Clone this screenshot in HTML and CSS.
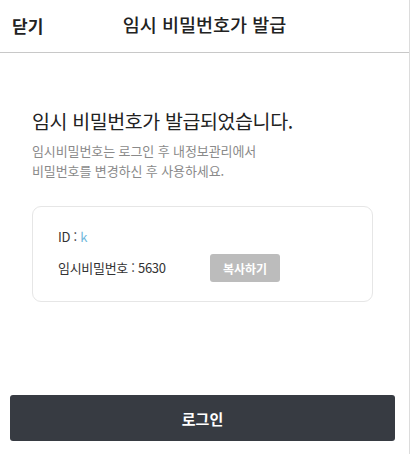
FILE: index.html
```html
<!DOCTYPE html>
<html lang="ko">

<head>
    <meta charset="UTF-8">
    <meta name="viewport" content="width=device-width, initial-scale=1.0">
    <title>임시 비밀번호가 발급</title>
    <link rel="stylesheet" href="styles.css">
</head>

<body>
    <div class="page">
        <!-- 상단 헤더 -->
        <header class="header">
            <a class="close-btn">닫기</a>
            <h1 class="header-title">임시 비밀번호가 발급</h1>
        </header>

        <div class="content">
            <h2 class="result-title">임시 비밀번호가 발급되었습니다.</h2>
            <p class="result-desc">임시비밀번호는 로그인 후 내정보관리에서<br>비밀번호를 변경하신 후 사용하세요.</p>

            <!-- 발급 정보 -->
            <div class="info-box">
                <p class="info-row">ID : <span class="user-id">k</span></p>
                <div class="info-row pw-row">
                    <span class="pw-text">임시비밀번호 : 5630</span>
                    <button class="copy-btn">복사하기</button>
                </div>
            </div>
        </div>

        <div class="bottom">
            <button class="login-btn">로그인</button>
        </div>
    </div>
</body>

</html>
```

FILE: styles.css
```css
/* General Styles */
body {
    font-family: 'Noto Sans CJK KR', 'Noto Sans', sans-serif;
    background-color: #fff;
    color: #222;
    margin: 0;
    padding: 0;
}

.page {
    width: 409px;
    min-height: 454px;
    border-right: 1px solid #dcdcdc;
    display: flex;
    flex-direction: column;
}

/* Header */
.header {
    position: relative;
    height: 52px;
    border-bottom: 1px solid #c8c8c8;
    display: flex;
    align-items: center;
    justify-content: center;
}

.close-btn {
    position: absolute;
    left: 12px;
    top: 13px;
    font-size: 17px;
    font-weight: bold;
    color: #222;
    cursor: pointer;
}

.header-title {
    margin: 0;
    font-size: 18.5px;
    font-weight: 500;
    color: #222;
    padding-bottom: 5px;
}

/* Content */
.content {
    padding: 53px 36px 0 32px;
}

.result-title {
    margin: 0;
    font-size: 19.5px;
    font-weight: 400;
    color: #222;
    line-height: 30px;
    letter-spacing: -0.4px;
}

.result-desc {
    margin: 5px 0 0;
    font-size: 13px;
    color: #8a8a8a;
    line-height: 20px;
    letter-spacing: -0.1px;
}

.info-box {
    margin-top: 25px;
    border: 1px solid #e6e6e6;
    border-radius: 9px;
    padding: 20px 25px 19px;
}

.info-row {
    margin: 0;
    font-size: 13px;
    color: #333;
    line-height: 20px;
    letter-spacing: -0.3px;
}

.user-id {
    color: #6fb7dc;
}

.pw-row {
    display: flex;
    align-items: center;
    margin-top: 7px;
}

.pw-text {
    width: 152px;
}

.copy-btn {
    width: 70px;
    height: 28px;
    border: none;
    border-radius: 3px;
    background-color: #bcbcbc;
    color: #fff;
    font-family: inherit;
    font-size: 12px;
    font-weight: bold;
    padding: 0;
}

/* Bottom */
.bottom {
    margin-top: auto;
    padding: 0 14px 13px 10px;
}

.login-btn {
    width: 100%;
    height: 46px;
    border: none;
    border-radius: 3px;
    background-color: #373b42;
    color: #fff;
    font-family: inherit;
    font-size: 15px;
    font-weight: bold;
    cursor: pointer;
}
```
